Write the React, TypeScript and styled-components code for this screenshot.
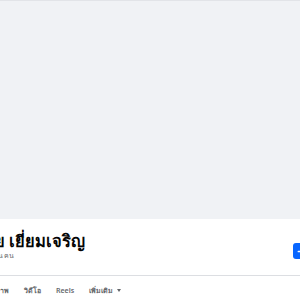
import React from 'react';
import styled, { createGlobalStyle } from 'styled-components';

const GlobalStyle = createGlobalStyle`
    html, body {
        margin: 0;
        padding: 0;
        background: #fff;
        font-family: "Noto Sans", "Liberation Sans", sans-serif;
        overflow: hidden;
    }
`

const tabs = ['รูปภาพ', 'วิดีโอ', 'Reels']

export default function App() {
    return (
        <Page>
            <GlobalStyle />
            <Cover />
            <Info>
                <NameBlock>
                    <Name>วิชัย เยี่ยมเจริญ</Name>
                    <Friends>เพื่อน 1.2 พัน คน</Friends>
                </NameBlock>
                <AddButton>
                    <svg width="9" height="9" viewBox="0 0 16 16" fill="#fff">
                        <rect x="6.5" y="1" width="3" height="14" rx="1.5" />
                        <rect x="1" y="6.5" width="14" height="3" rx="1.5" />
                    </svg>
                    เพิ่มเพื่อน
                </AddButton>
            </Info>
            <Tabs>
                {tabs.map((t) => (
                    <Tab key={t}>{t}</Tab>
                ))}
                <Tab>
                    เพิ่มเติม
                    <Caret />
                </Tab>
            </Tabs>
        </Page>
    )
}

const Page = styled.div`
    width: 300px;
    height: 300px;
    overflow: hidden;
    border-top: 1px solid #e2e4e8;
    box-sizing: border-box;
`

const Cover = styled.div`
    height: 218px;
    background: #f0f2f5;
`

const Info = styled.div`
    display: flex;
    align-items: flex-start;
    justify-content: space-between;
    height: 56px;
    border-bottom: 1px solid #dcdee2;
    margin-left: -25px;
    margin-right: -73px;
`

const NameBlock = styled.div`
    display: flex;
    flex-direction: column;
    padding-top: 11px;
`

const Name = styled.h1`
    margin: 0;
    font-size: 16.5px;
    font-weight: 700;
    color: #050505;
    line-height: 21px;
    white-space: nowrap;
`

const Friends = styled.span`
    margin-left: -12px;
    font-size: 7px;
    color: #65676b;
    line-height: 10px;
    white-space: nowrap;
`

const AddButton = styled.div`
    margin-top: 24px;
    width: 80px;
    height: 16px;
    box-sizing: border-box;
    display: flex;
    align-items: center;
    gap: 3px;
    padding: 0 6px 0 4px;
    background: #0866ff;
    color: #fff;
    border-radius: 3px;
    font-size: 8px;
    font-weight: 600;
    white-space: nowrap;
`

const Tabs = styled.div`
    display: flex;
    align-items: center;
    height: 28px;
    gap: 15px;
    margin-left: -13px;
`

const Tab = styled.div`
    display: flex;
    align-items: center;
    gap: 4px;
    font-size: 7px;
    font-weight: 600;
    color: #65676b;
    white-space: nowrap;
`

const Caret = styled.span`
    width: 0;
    height: 0;
    border-left: 2.5px solid transparent;
    border-right: 2.5px solid transparent;
    border-top: 3px solid #65676b;
`
